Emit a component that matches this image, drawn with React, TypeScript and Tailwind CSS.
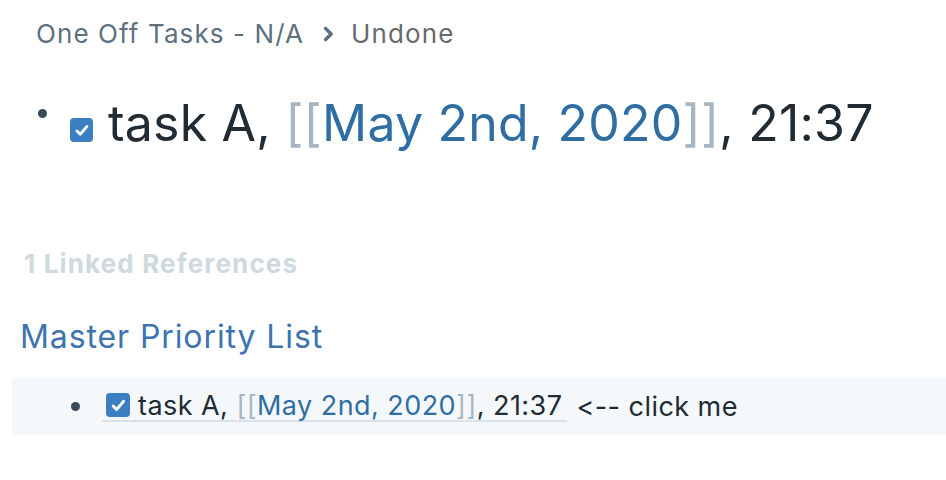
import React from "react";

function Check({ size }: { size: string }) {
  return (
    <span className={`inline-flex items-center justify-center rounded-[4px] bg-[#3b7fc0] ${size} shrink-0`}>
      <svg viewBox="0 0 16 16" className="w-[78%] h-[78%]" fill="none" stroke="white" strokeWidth="2.5" strokeLinecap="round" strokeLinejoin="round">
        <path d="M3.5 8.5 L6.5 11.5 L12.5 4.5" />
      </svg>
    </span>
  );
}

export default function App() {
  return (
    <div className="w-[946px] h-[480px] bg-white overflow-hidden [font-feature-settings:'calt'_0,'liga'_0]" style={{ fontFamily: "Inter, 'Noto Sans', sans-serif" }}>
      <div className="flex items-center pl-[36px] pt-[16px] h-[36px] box-content text-[26px] leading-none tracking-[1.1px]">
        <span className="text-[#5c7080]">One Off Tasks - N/A</span>
        <svg viewBox="0 0 16 16" className="w-[20px] h-[20px] ml-[14px] mr-[13px]" fill="none" stroke="#5c7080" strokeWidth="2.8" strokeLinecap="round" strokeLinejoin="round">
          <path d="M6 3.5 L10.5 8 L6 12.5" />
        </svg>
        <span className="text-[#666a6f]">Undone</span>
      </div>
      <div className="flex items-center mt-[39px] h-[64px]">
        <span className="ml-[38px] w-[9px] h-[9px] rounded-full bg-[#394b59] self-start mt-[18px]" />
        <span className="ml-[23px] mt-[18px]"><Check size="w-[23px] h-[24px]" /></span>
        <span className="ml-[15px] text-[50px] text-[#202b33] leading-none tracking-[0.2px]">
          task A, <span className="text-[#a7b6c2]">[[</span><span className="text-[#2f6ea3]">May 2nd, 2020</span><span className="text-[#a7b6c2]">]]</span>, 21:37
        </span>
      </div>
      <div className="mt-[96px] pl-[24px] text-[26px] font-bold text-[#ced9e0] leading-none tracking-[1.15px]">1 Linked References</div>
      <div className="mt-[44px] pl-[20px] text-[32px] text-[#3d74b0] leading-none tracking-[0.9px]">Master Priority List</div>
      <div className="mt-[25px] ml-[12px] h-[57px] bg-[#f5f8fa] flex items-center">
        <span className="ml-[59px] w-[9px] h-[9px] rounded-full bg-[#394b59]" />
        <span className="ml-[22px] flex items-center border-b-2 border-[#d8e1e8] pl-[4px] pr-[5px] pb-[1px]">
          <Check size="w-[24px] h-[24px]" />
          <span className="ml-[8px] text-[27px] text-[#202b33] leading-none tracking-[0.45px]">
            task A, <span className="text-[#a7b6c2]">[[</span><span className="text-[#2f6ea3]">May 2nd, 2020</span><span className="text-[#a7b6c2]">]]</span>, 21:37
          </span>
        </span>
        <span className="ml-[9px] text-[27px] text-[#202b33] leading-none tracking-[0.45px]">{"<-- click me"}</span>
      </div>
    </div>
  );
}
